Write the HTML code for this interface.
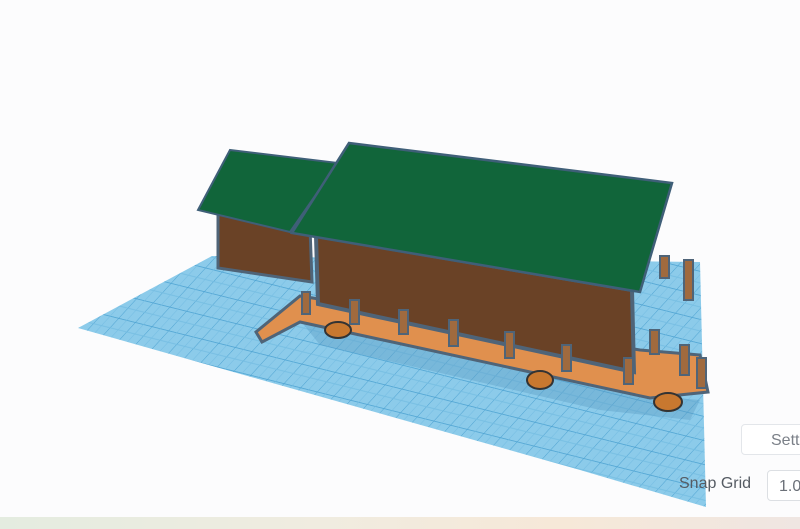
<!DOCTYPE html>
<html><head><style>
body{margin:0;width:800px;height:529px;overflow:hidden;background:#fcfcfd;font-family:"Liberation Sans",sans-serif;position:relative}
svg{position:absolute;left:0;top:0}
.btn{position:absolute;left:741px;top:424px;width:70px;height:31px;border:1px solid #e3e6ea;border-radius:4px;background:#fff;color:#7b8088;font-size:16px;line-height:31px;padding-left:29px;box-sizing:border-box;white-space:nowrap;overflow:hidden}
.lbl{position:absolute;left:679px;top:475px;font-size:16px;color:#555b63;white-space:nowrap}
.inp{position:absolute;left:767px;top:470px;width:50px;height:31px;border:1px solid #dcdfe3;border-radius:4px;background:#fff;color:#6b7078;font-size:16px;line-height:31px;padding-left:11px;box-sizing:border-box;white-space:nowrap;overflow:hidden}
.bar{position:absolute;left:0;top:517px;width:800px;height:12px;background:linear-gradient(90deg,#e4ece0,#f0ece0 40%,#f6e8d8 70%,#efe6e2)}
</style></head><body>
<svg width="800" height="529" viewBox="0 0 800 529">
<defs>
<pattern id="g" width="20" height="20" patternUnits="userSpaceOnUse" patternTransform="skewX(-35) rotate(12)">
<rect width="20" height="20" fill="#8ccbea"/>
<path d="M0 0H20M0 0V20" stroke="#4ea3d2" stroke-width="1.3"/>
<path d="M0 10H20M10 0V20" stroke="#75bde2" stroke-width="0.7"/>
</pattern>
</defs>
<polygon points="78,328 212,256 700,262 706,507 580,470" fill="url(#g)"/>
<!-- back house -->
<polygon points="218,210 310,228 312,282 218,268" fill="#6a4226" stroke="#4f6478" stroke-width="3"/>
<polygon points="230,150 338,163 290,232 198,210" fill="#11653a" stroke="#3f5f78" stroke-width="2"/>
<!-- shadow -->
<polygon points="300,320 640,395 700,400 690,420 600,410 320,345" fill="#5a9cc4" opacity="0.4"/>
<!-- deck -->
<polygon points="300,296 640,350 700,355 708,392 650,398 300,322 262,342 256,332" fill="#e0904e" stroke="#4f6478" stroke-width="3"/>
<!-- main wall -->
<polygon points="316,236 632,290 634,372 318,304" fill="#6a4226" stroke="#4f6478" stroke-width="4"/>
<!-- main roof -->
<polygon points="349,143 672,183 640,292 292,233" fill="#11653a" stroke="#3f5f78" stroke-width="2.5"/>
<!-- posts -->
<g fill="#a06a3e" stroke="#4f6478" stroke-width="2">
<rect x="302" y="292" width="8" height="22"/>
<rect x="350" y="300" width="9" height="24"/>
<rect x="399" y="310" width="9" height="24"/>
<rect x="449" y="320" width="9" height="26"/>
<rect x="505" y="332" width="9" height="26"/>
<rect x="562" y="345" width="9" height="26"/>
<rect x="624" y="358" width="9" height="26"/>
<rect x="660" y="256" width="9" height="22"/>
<rect x="684" y="260" width="9" height="40"/>
<rect x="650" y="330" width="9" height="24"/>
<rect x="680" y="345" width="9" height="30"/>
<rect x="697" y="358" width="9" height="30"/>
</g>
<g fill="#c8782f" stroke="#333" stroke-width="2">
<ellipse cx="338" cy="330" rx="13" ry="8"/>
<ellipse cx="540" cy="380" rx="13" ry="9"/>
<ellipse cx="668" cy="402" rx="14" ry="9"/>
</g>
</svg>
<div class="btn">Settings</div>
<div class="lbl">Snap Grid</div>
<div class="inp">1.0 mm</div>
<div class="bar"></div>
</body></html>
